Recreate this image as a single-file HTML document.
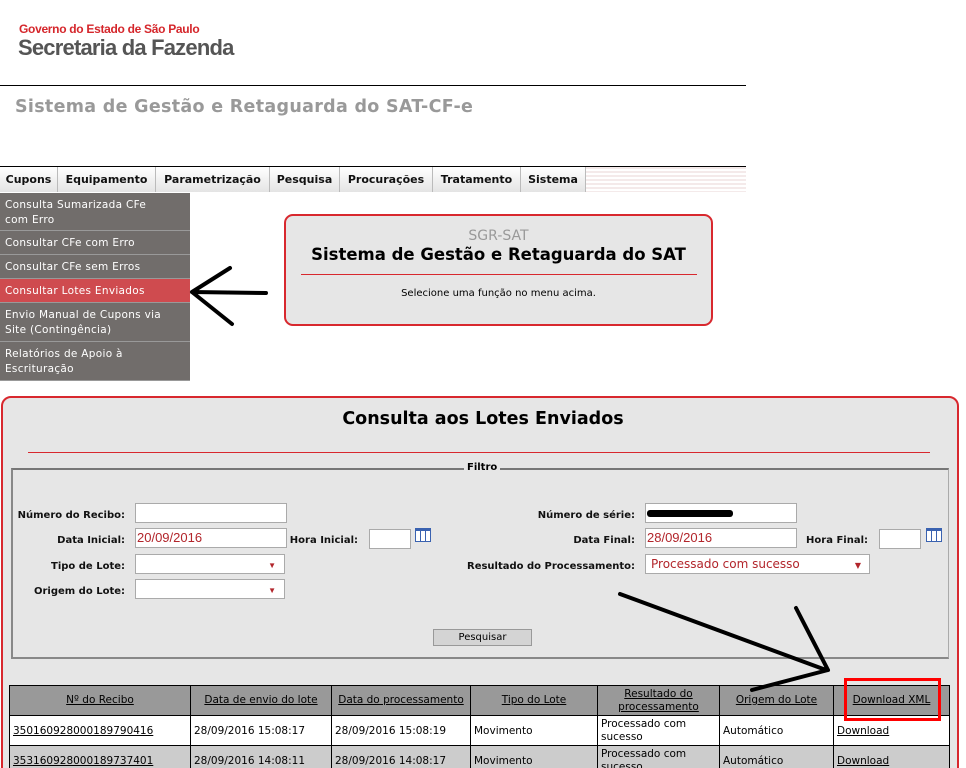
<!DOCTYPE html>
<html><head><meta charset="utf-8"><style>
*{margin:0;padding:0;box-sizing:border-box}
html,body{width:966px;height:768px;overflow:hidden}
body{background:#fff;font-family:"DejaVu Sans",Verdana,sans-serif;font-size:11px;position:relative}
.a{position:absolute}
.menu{left:0;top:166px;width:746px;height:26px;border-top:1px solid #000;background:linear-gradient(#fff,#e4e4e4);}
.menu span{position:absolute;top:0;height:25px;line-height:26px;font-weight:bold;font-size:11px;color:#111;text-align:center;border-right:1px solid #bbb}
.dd{left:0;width:190px;background:#716d6b;color:#fff;font-size:10.5px;line-height:15px;padding:5px 22px 5px 5px;border-bottom:1px solid #999;letter-spacing:.3px}
.lbl{font-weight:bold;font-size:10px;text-align:right;color:#111}
.inp{background:#fff;border:1px solid #aaa;height:20px;color:#b2252b;font-family:"Liberation Sans",Arial,sans-serif;font-size:13px;line-height:18px;padding-left:1px}
.sel::after{content:"▼";position:absolute;right:8px;top:2px;color:#b2252b;font-size:8px}
.cal{width:16px;height:14px;background:#fff;border:1px solid #3a62b0;border-top:3px solid #3a62b0;background-image:linear-gradient(90deg,transparent 4px,#3a62b0 4px,#3a62b0 5px,transparent 5px,transparent 9px,#3a62b0 9px,#3a62b0 10px,transparent 10px);}
table{border-collapse:collapse;font-size:10.5px}
td{border:1px solid #000;padding:0 3px;height:30px}
th{background:#999;border:1px solid #000;font-weight:normal;text-decoration:underline;height:30px;line-height:13px}
</style></head><body>
<div class="a" style="left:19px;top:22px;color:#d5262b;font-family:'Liberation Sans',Arial,sans-serif;font-weight:bold;font-size:12px;letter-spacing:-.3px">Governo do Estado de São Paulo</div>
<div class="a" style="left:18px;top:35px;color:#555;font-family:'Liberation Sans',Arial,sans-serif;font-weight:bold;font-size:22px;letter-spacing:-.8px">Secretaria da Fazenda</div>
<div class="a" style="left:0;top:85px;width:746px;height:1px;background:#000"></div>
<div class="a" style="left:15px;top:97px;color:#999;font-weight:bold;font-size:17.5px;letter-spacing:.3px">Sistema de Gestão e Retaguarda do SAT-CF-e</div>

<div class="a menu">
<span style="left:0;width:58px">Cupons</span>
<span style="left:58px;width:98px">Equipamento</span>
<span style="left:156px;width:114px">Parametrização</span>
<span style="left:270px;width:70px">Pesquisa</span>
<span style="left:340px;width:93px">Procurações</span>
<span style="left:433px;width:88px">Tratamento</span>
<span style="left:521px;width:65px">Sistema</span>
<span style="left:586px;width:160px;border:none;background:repeating-linear-gradient(#f4eaea 0 2px,#fff 2px 4px)"></span>
</div>

<div class="a dd" style="top:193px;height:38px">Consulta Sumarizada CFe com Erro</div>
<div class="a dd" style="top:231px;height:24px">Consultar CFe com Erro</div>
<div class="a dd" style="top:255px;height:24px">Consultar CFe sem Erros</div>
<div class="a dd" style="top:279px;height:24px;background:#cf4b4f">Consultar Lotes Enviados</div>
<div class="a dd" style="top:303px;height:39px">Envio Manual de Cupons via Site (Contingência)</div>
<div class="a dd" style="top:342px;height:39px">Relatórios de Apoio à Escrituração</div>

<div class="a" style="left:284px;top:214px;width:429px;height:112px;border:2px solid #d8282e;border-radius:9px;background:#e6e6e6;text-align:center">
<div style="color:#999;font-size:14px;margin-top:12px">SGR-SAT</div>
<div style="font-weight:bold;font-size:16.5px;margin-top:1px">Sistema de Gestão e Retaguarda do SAT</div>
<div style="margin:10px auto 0;width:396px;height:1px;background:#d8282e"></div>
<div style="margin-top:13px;font-size:10px">Selecione uma função no menu acima.</div>
</div>

<div class="a" style="left:1px;top:396px;width:958px;height:390px;border:2px solid #d8282e;border-radius:10px;background:#e6e6e6"></div>
<div class="a" style="left:0;top:409px;width:966px;text-align:center;font-weight:bold;font-size:17.5px">Consulta aos Lotes Enviados</div>
<div class="a" style="left:28px;top:452px;width:902px;height:1px;background:#d8282e"></div>
<div class="a" style="left:11px;top:468px;width:938px;height:191px;border-style:solid;border-width:2px 1px 2px 2px;border-color:#777 #aaa #888 #888"></div>
<div class="a" style="left:464px;top:462px;background:#e6e6e6;padding:0 3px;font-weight:bold;font-size:10px">Filtro</div>

<div class="a lbl" style="left:0;top:510px;width:125px">Número do Recibo:</div>
<div class="a inp" style="left:135px;top:503px;width:152px"></div>
<div class="a lbl" style="left:0;top:535px;width:125px">Data Inicial:</div>
<div class="a inp" style="left:135px;top:528px;width:152px">20/09/2016</div>
<div class="a lbl" style="left:280px;top:535px;width:78px">Hora Inicial:</div>
<div class="a inp" style="left:369px;top:529px;width:42px"></div>
<div class="a cal" style="left:415px;top:528px"></div>
<div class="a lbl" style="left:0;top:561px;width:125px">Tipo de Lote:</div>
<div class="a inp sel" style="left:135px;top:554px;width:150px"></div>
<div class="a lbl" style="left:0;top:586px;width:125px">Origem do Lote:</div>
<div class="a inp sel" style="left:135px;top:579px;width:150px"></div>

<div class="a lbl" style="left:400px;top:510px;width:235px">Número de série:</div>
<div class="a inp" style="left:645px;top:503px;width:152px"><span style="display:inline-block;margin-top:6px;width:86px;height:7px;background:#000;border-radius:3px"></span></div>
<div class="a lbl" style="left:400px;top:535px;width:235px">Data Final:</div>
<div class="a inp" style="left:645px;top:528px;width:152px">28/09/2016</div>
<div class="a lbl" style="left:790px;top:535px;width:78px">Hora Final:</div>
<div class="a inp" style="left:879px;top:529px;width:42px"></div>
<div class="a cal" style="left:926px;top:528px"></div>
<div class="a lbl" style="left:400px;top:561px;width:235px">Resultado do Processamento:</div>
<div class="a inp sel" style="left:645px;top:554px;width:225px;padding-left:5px;font-family:'DejaVu Sans',sans-serif;font-size:12px">Processado com sucesso</div>

<div class="a" style="left:433px;top:629px;width:99px;height:17px;border:1px solid #999;background:#d4d4d4;text-align:center;font-size:10px;line-height:15px">Pesquisar</div>

<table class="a" style="left:9px;top:685px;width:941px">
<tr><th style="width:181px">Nº do Recibo</th><th style="width:141px">Data de envio do lote</th><th style="width:139px">Data do processamento</th><th style="width:127px">Tipo do Lote</th><th style="width:122px">Resultado do<br>processamento</th><th style="width:114px">Origem do Lote</th><th>Download XML</th></tr>
<tr style="background:#fff"><td><u>350160928000189790416</u></td><td>28/09/2016 15:08:17</td><td>28/09/2016 15:08:19</td><td>Movimento</td><td style="line-height:13px">Processado com sucesso</td><td>Automático</td><td><u>Download</u></td></tr>
<tr style="background:#ccc"><td><u>353160928000189737401</u></td><td>28/09/2016 14:08:11</td><td>28/09/2016 14:08:17</td><td>Movimento</td><td style="line-height:13px">Processado com sucesso</td><td>Automático</td><td><u>Download</u></td></tr>
</table>
<div class="a" style="left:844px;top:678px;width:97px;height:43px;border:3px solid #f00"></div>

<svg class="a" style="left:0;top:0" width="966" height="768">
<g stroke="#000" stroke-width="4" stroke-linecap="round" fill="none">
<path d="M192 292 L266 293 M192 292 L230 268 M192 292 L232 324"/>
<path d="M620 594 L826 670 M796 608 L828 670 M828 670 L752 690"/>
</g></svg>
</body></html>
